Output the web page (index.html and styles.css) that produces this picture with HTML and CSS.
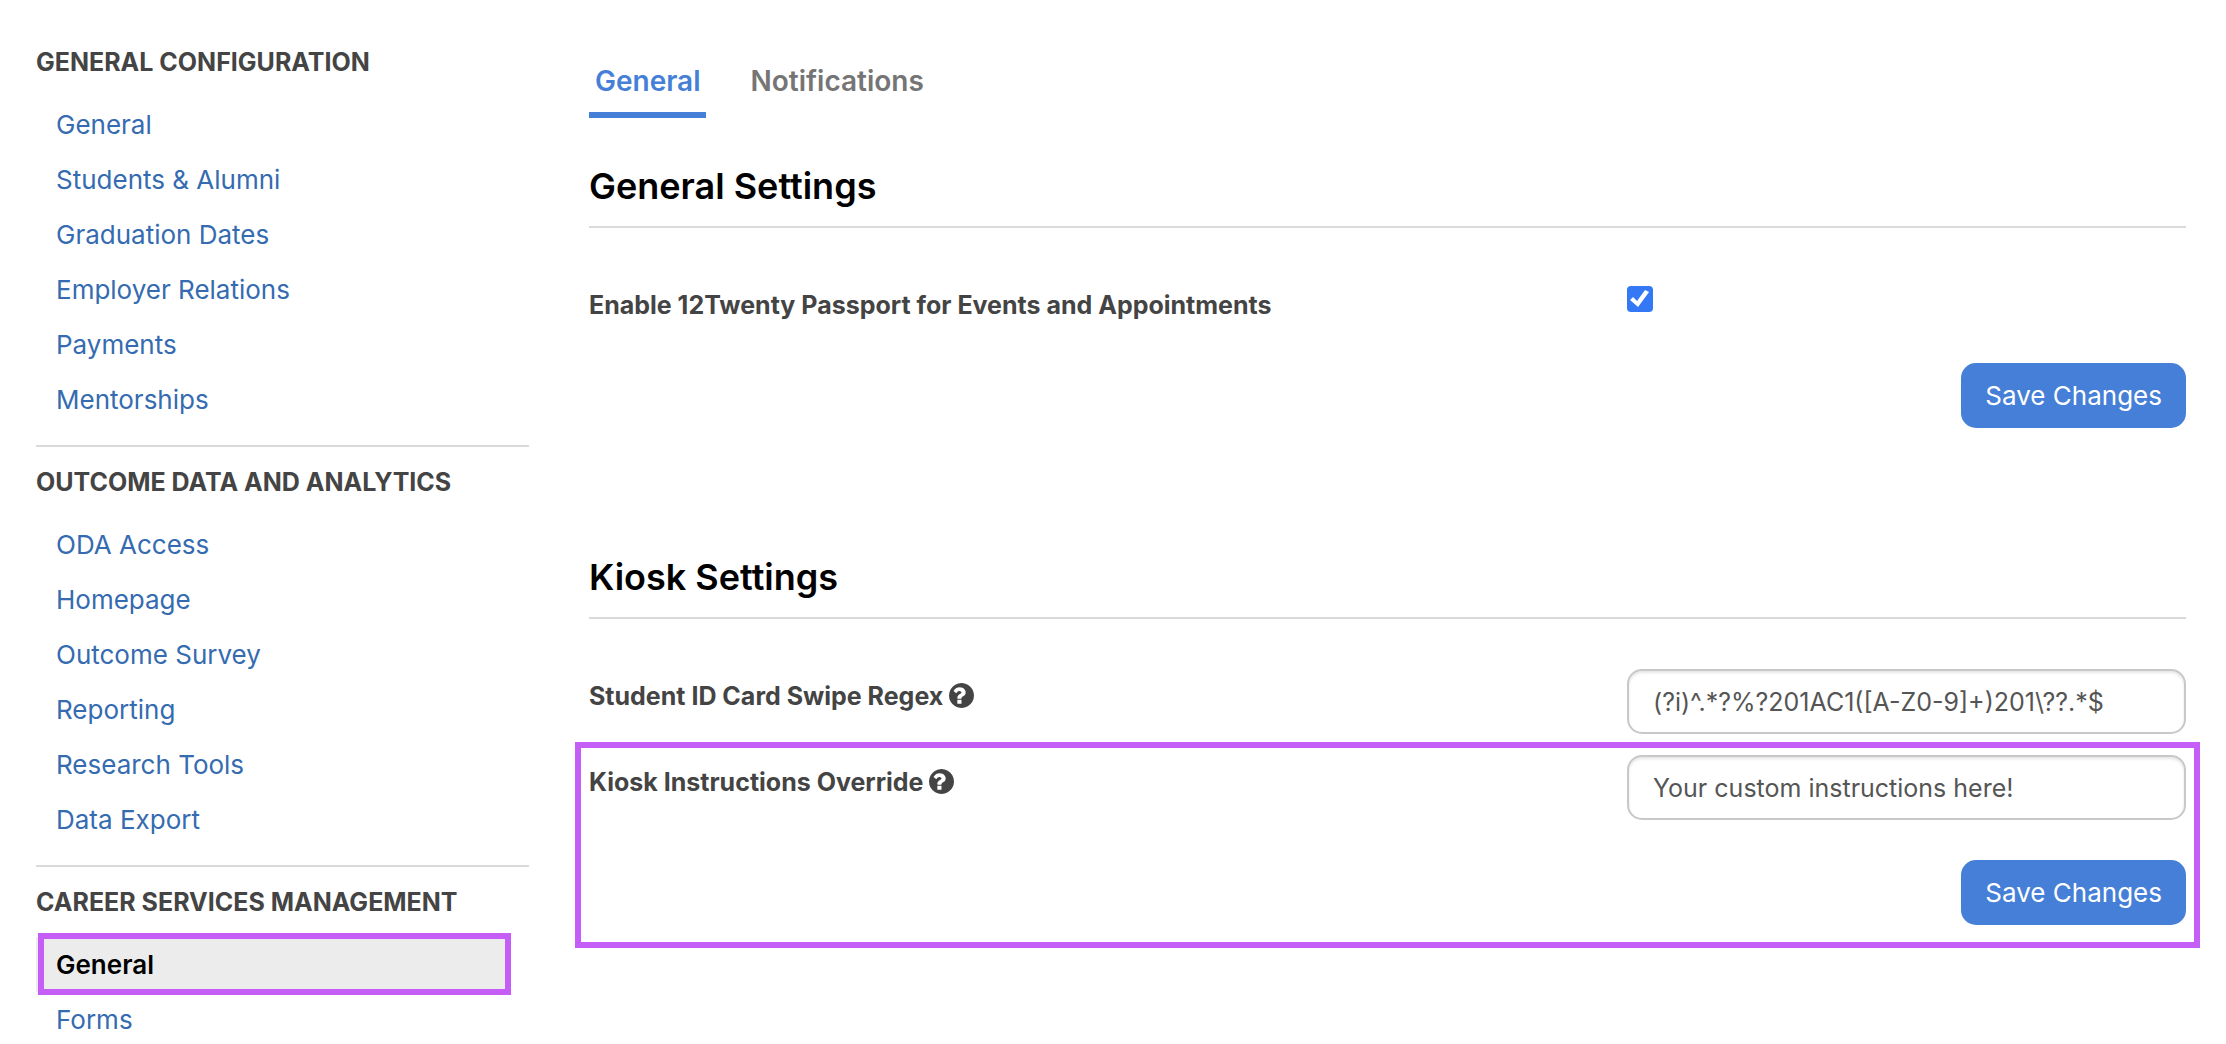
FILE: index.html
```html
<!DOCTYPE html>
<html lang="en">
<head>
<meta charset="utf-8">
<meta name="viewport" content="width=device-width, initial-scale=1">
<title>General Settings</title>
<link rel="stylesheet" href="styles.css">
</head>
<body>
<svg class="sprite" aria-hidden="true">
  <symbol id="help" viewBox="128 128 1536 1536">
    <path d="M896 1376v-192q0-14-9-23t-23-9h-192q-14 0-23 9t-9 23v192q0 14 9 23t23 9h192q14 0 23-9t9-23zM1152 704q0-88-55.500-163t-138.500-116-170-41q-243 0-371 213-15 24 8 42l132 100q7 6 19 6 16 0 25-12 53-68 86-92 34-24 86-24 48 0 85.500 26t37.500 59q0 38-20 61t-68 45q-63 28-115.500 86.500t-52.500 125.500v36q0 14 9 23t23 9h192q14 0 23-9t9-23q0-19 21.500-49.500t54.500-49.500q32-18 49-28.500t46-35 44.500-48 28-60.500 12.500-81zM1664 896q0 209-103 385.500t-279.500 279.500-385.500 103-385.500-103-279.500-279.500-103-385.500 103-385.500 279.500-279.500 385.500-103 385.500 103 279.500 279.500 103 385.500z"/>
  </symbol>
</svg>
<div class="layout">
  <nav class="sidebar" aria-label="Configuration">
    <section class="group">
      <h2 class="group-title">GENERAL CONFIGURATION</h2>
      <ul class="links">
        <li><a class="link" href="#">General</a></li>
        <li><a class="link" href="#">Students &amp; Alumni</a></li>
        <li><a class="link" href="#">Graduation Dates</a></li>
        <li><a class="link" href="#">Employer Relations</a></li>
        <li><a class="link" href="#">Payments</a></li>
        <li><a class="link" href="#">Mentorships</a></li>
      </ul>
    </section>
    <section class="group">
      <h2 class="group-title">OUTCOME DATA AND ANALYTICS</h2>
      <ul class="links">
        <li><a class="link" href="#">ODA Access</a></li>
        <li><a class="link" href="#">Homepage</a></li>
        <li><a class="link" href="#">Outcome Survey</a></li>
        <li><a class="link" href="#">Reporting</a></li>
        <li><a class="link" href="#">Research Tools</a></li>
        <li><a class="link" href="#">Data Export</a></li>
      </ul>
    </section>
    <section class="group">
      <h2 class="group-title">CAREER SERVICES MANAGEMENT</h2>
      <ul class="links">
        <li><a class="link link-active" href="#" aria-current="page">General</a></li>
        <li><a class="link" href="#">Forms</a></li>
      </ul>
    </section>
  </nav>
  <main class="main">
    <nav class="tabs" aria-label="Sections">
      <a class="tab tab-active" href="#" aria-current="page">General</a>
      <a class="tab" href="#">Notifications</a>
    </nav>
    <form class="settings">
      <h1 class="title">General Settings</h1>
      <div class="row">
        <label class="label" for="passport">Enable 12Twenty Passport for Events and Appointments</label>
        <input class="check" type="checkbox" id="passport" checked>
      </div>
      <div class="actions"><button class="button" type="button">Save Changes</button></div>
    </form>
    <form class="settings">
      <h1 class="title">Kiosk Settings</h1>
      <div class="row">
        <label class="label" for="regex">Student ID Card Swipe Regex <svg class="help"><use href="#help"/></svg></label>
        <input class="field" type="text" id="regex" value="(?i)^.*?%?201AC1([A-Z0-9]+)201\??.*$">
      </div>
      <div class="highlight">
        <div class="row">
          <label class="label" for="instructions">Kiosk Instructions Override <svg class="help"><use href="#help"/></svg></label>
          <input class="field" type="text" id="instructions" value="Your custom instructions here!">
        </div>
        <div class="actions"><button class="button" type="button">Save Changes</button></div>
      </div>
    </form>
  </main>
</div>
</body>
</html>
```
FILE: styles.css
```css
* {
  box-sizing: border-box;
}

body {
  margin: 0;
  background: #fff;
  color: #444;
  font: 400 26px/36px Inter, "Liberation Sans", sans-serif;
}

a {
  text-decoration: none;
}

.sprite {
  display: none;
}

.layout {
  display: grid;
  grid-template-columns: minmax(0, 493fr) minmax(0, 1597fr);
  column-gap: 60px;
  padding: 0 40px 0 36px;
}

/* Sidebar */
.sidebar {
  padding-top: 28px;
}

.group {
  padding: 18px 0;
}

.group + .group {
  padding-top: 19px;
  border-top: 2px solid #dadada;
}

.group:last-child {
  padding-bottom: 0;
}

.group-title {
  margin: 0 0 18px;
  font-size: 25px;
  font-weight: 700;
  line-height: 33px;
}

.links {
  margin: 0;
  padding: 0;
  list-style: none;
}

.link {
  display: block;
  padding: 0 20px;
  color: #356bb0;
  line-height: 55px;
}

.link-active {
  position: relative;
  margin-right: 20px;
  background: #ececec;
  color: #000;
  font-weight: 600;
}

.link-active::after {
  content: "";
  position: absolute;
  inset: -4px -2px -3px 2px;
  border: 6px solid #c45ef7;
}

/* Content */
.main {
  padding-top: 61px;
}

.tabs {
  display: flex;
  gap: 38px;
  margin-bottom: 46px;
}

.tab {
  padding: 0 6px 11px;
  border-bottom: 6px solid transparent;
  color: #757575;
  font-size: 28px;
  font-weight: 600;
  line-height: 40px;
}

.tab-active {
  border-color: #467fd7;
  color: #467fd7;
}

.settings + .settings {
  margin-top: 127px;
}

.title {
  margin: 0 0 50px;
  padding-bottom: 18px;
  border-bottom: 2px solid #dadada;
  color: #000;
  font-size: 36px;
  font-weight: 600;
  line-height: 44px;
}

.row {
  display: grid;
  grid-template-columns: minmax(0, 65fr) minmax(0, 35fr);
  align-items: start;
  margin-bottom: 21px;
}

.label {
  padding-top: 9px;
  font-size: 25px;
  font-weight: 700;
}

.help {
  width: 25px;
  height: 25px;
  vertical-align: -3px;
  fill: #444;
}

.check {
  appearance: none;
  width: 26px;
  height: 26px;
  margin: 8px 0 0;
  border: 2px solid #767676;
  border-radius: 4px;
  background: #fff;
}

.check:checked {
  border: 0;
  background: #3478f6;
}

.check:checked::before {
  content: "";
  display: block;
  width: 26px;
  height: 26px;
  background: #fff;
  clip-path: polygon(3px 14px, 6px 11px, 10px 15px, 18px 4px, 22px 6px, 11px 21px);
}

.field {
  width: 100%;
  height: 65px;
  padding: 0 24px;
  border: 2px solid #c8c8c8;
  border-radius: 15px;
  background: #fff;
  box-shadow: inset 0 2px 3px rgba(0, 0, 0, 0.1);
  color: #555;
  font: inherit;
  font-size: 25px;
}

.actions {
  display: flex;
  justify-content: flex-end;
  padding-top: 19px;
}

.button {
  height: 65px;
  padding: 0 24px;
  border: 0;
  border-radius: 15px;
  background: #467fd7;
  color: #fff;
  font: inherit;
}

.highlight {
  position: relative;
}

.highlight::after {
  content: "";
  position: absolute;
  inset: -13px -14px -23px;
  border: 6px solid #c45ef7;
  pointer-events: none;
}
```
